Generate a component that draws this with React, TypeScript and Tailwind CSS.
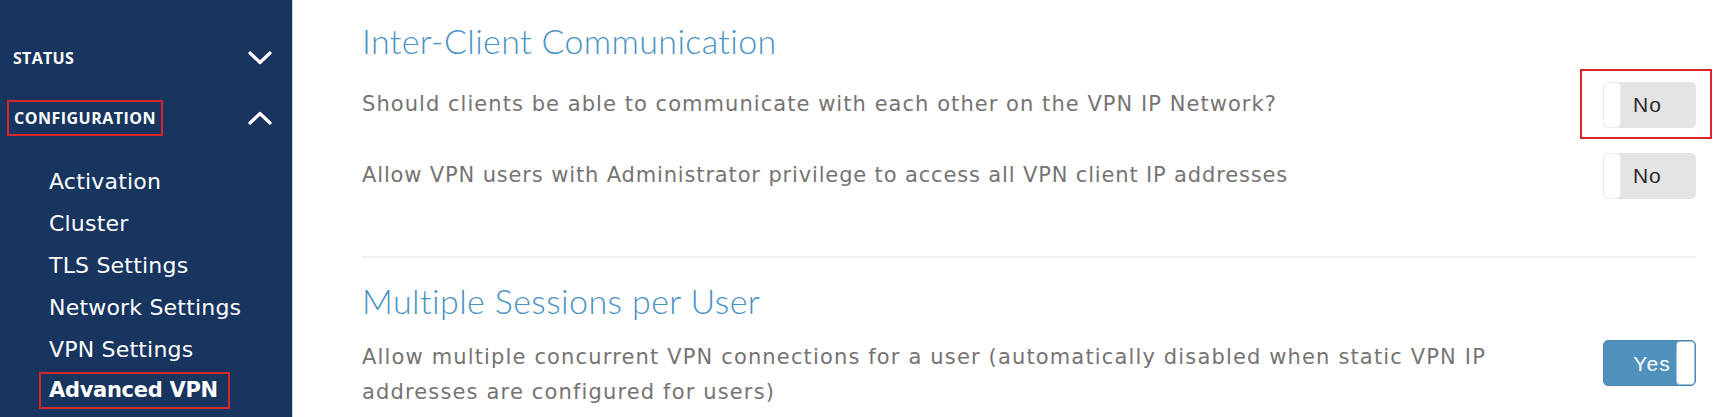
import React from 'react';

const bodyFont = { fontFamily: '"DejaVu Sans", "Liberation Sans", sans-serif' };
const navFont = { fontFamily: '"DejaVu Sans", "Open Sans", sans-serif' };

const navItems = ['Activation', 'Cluster', 'TLS Settings', 'Network Settings', 'VPN Settings'];

function Chevron({ up }: { up?: boolean }) {
  return (
    <svg width="24" height="14" viewBox="0 0 24 14" fill="none" className="shrink-0">
      <path
        d={up ? 'M2 12 L12 2.5 L22 12' : 'M2 2 L12 11.5 L22 2'}
        stroke="white"
        strokeWidth="3.2"
        strokeLinecap="round"
        strokeLinejoin="round"
      />
    </svg>
  );
}

function Toggle({ on }: { on?: boolean }) {
  if (on) {
    return (
      <div className="flex h-[46px] w-[93px] shrink-0 items-stretch justify-end rounded-[5px] border border-[#4a87b3] bg-[#5090bd]">
        <span className="mr-[5px] self-center text-[21px] text-white font-['Liberation_Sans',sans-serif]">Yes</span>
        <span className="w-[19px] rounded-[4px] border border-[#9cc0da] bg-white" />
      </div>
    );
  }
  return (
    <div className="flex h-[46px] w-[93px] shrink-0 items-stretch rounded-[5px] bg-[#e4e4e4]">
      <span className="w-[18px] rounded-[5px] border border-[#ececec] bg-white" />
      <span className="ml-[12px] self-center text-[21px] text-[#2b2b2b] font-['Liberation_Sans',sans-serif]">No</span>
    </div>
  );
}

export default function App() {
  return (
    <div className="flex h-[417px] w-[1726px] overflow-hidden bg-white">
      <aside className="w-[293px] shrink-0 border-r border-[#cfd3da] bg-[#17355f] text-white">
        <div className="flex items-center justify-between pl-[13px] pr-[20px] pt-[48px] font-['Open_Sans',sans-serif]">
          <span className="text-[16px] font-bold leading-[20px] tracking-[0.3px]">STATUS</span>
          <Chevron />
        </div>
        <div className="mt-[32px] flex items-center justify-between pl-[7px] pr-[20px] font-['Open_Sans',sans-serif]">
          <span className="border-2 border-[#d8262c] px-[5px] py-[6px] text-[16px] font-bold leading-[20px] tracking-[0.5px]">
            CONFIGURATION
          </span>
          <Chevron up />
        </div>
        <ul className="mt-[25px] pl-[49px]" style={navFont}>
          {navItems.map((item) => (
            <li key={item} className="h-[42px] text-[22px] leading-[42px] tracking-[0.2px]">
              {item}
            </li>
          ))}
          <li className="-ml-[10px] mt-[1px]">
            <span className="inline-block border-2 border-[#d8262c] pl-[8px] pr-[10px] text-[21px] font-bold leading-[33px] tracking-[-0.3px]">
              Advanced VPN
            </span>
          </li>
        </ul>
      </aside>

      <main className="flex-1 pl-[69px] pr-[30px] pt-[21px]">
        <h2 className="text-[34px] font-light leading-[40px] tracking-[0.35px] text-[#4a92c4] font-['Lato',sans-serif]">
          Inter-Client Communication
        </h2>
        <div className="mt-[21px] flex items-center justify-between text-[21px] tracking-[1.05px] text-[#767373]" style={bodyFont}>
          <p>Should clients be able to communicate with each other on the VPN IP Network?</p>
          <div className="relative">
            <Toggle />
            <div className="pointer-events-none absolute -left-[23px] -top-[13px] h-[70px] w-[132px] border-2 border-[#d8262c]" />
          </div>
        </div>
        <div className="mt-[25px] flex items-center justify-between text-[21px] tracking-[0.85px] text-[#767373]" style={bodyFont}>
          <p>Allow VPN users with Administrator privilege to access all VPN client IP addresses</p>
          <Toggle />
        </div>
        <div className="mt-[57px] border-t-2 border-[#f0f0f0]" />
        <h2 className="mt-[23px] text-[34px] font-light leading-[40px] tracking-[0.4px] text-[#4a92c4] font-['Lato',sans-serif]">
          Multiple Sessions per User
        </h2>
        <div className="mt-[19px] flex items-start justify-between text-[21px] leading-[35px] tracking-[1.15px] text-[#767373]" style={bodyFont}>
          <p className="w-[1190px]">
            Allow multiple concurrent VPN connections for a user (automatically disabled when static VPN IP
            addresses are configured for users)
          </p>
          <Toggle on />
        </div>
      </main>
    </div>
  );
}
